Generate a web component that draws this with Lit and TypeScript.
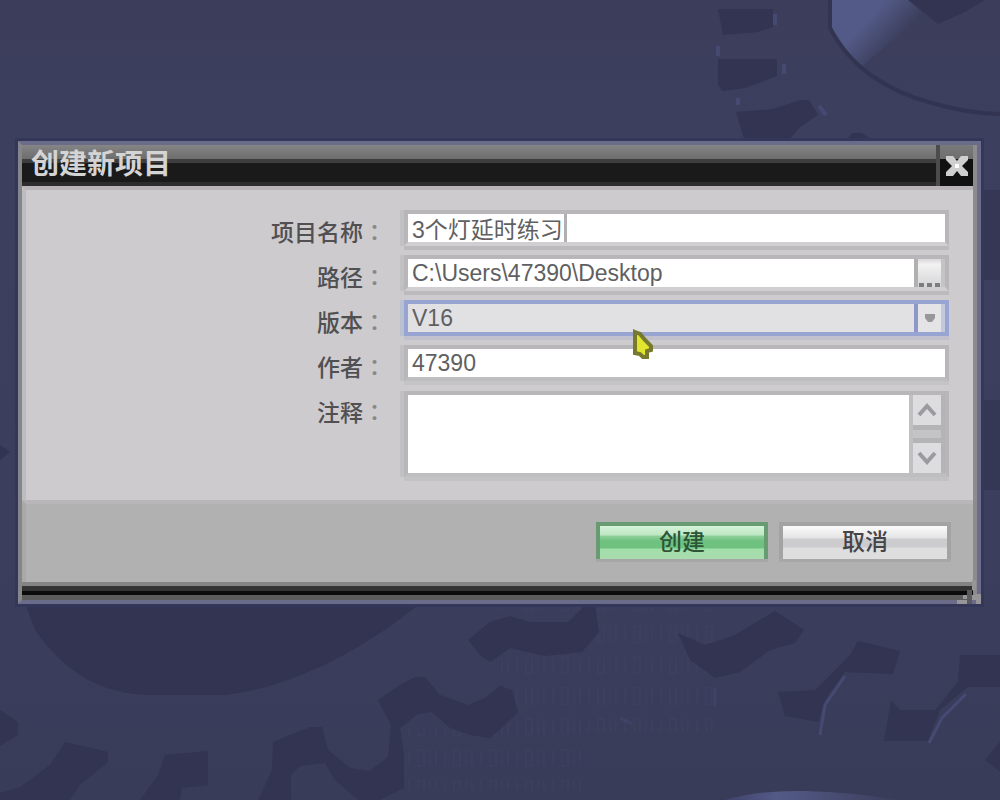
import { LitElement, html, css } from "lit";
import { customElement, state } from "lit/decorators.js";

@customElement("gear-backdrop")
class GearBackdrop extends LitElement {
  static styles = css`
    :host { display: block; overflow: hidden; }
    svg { display: block; width: 100%; height: 100%; }
  `;
  render() {
    return html`
      <svg viewBox="0 0 1000 800" preserveAspectRatio="xMidYMid slice" aria-hidden="true">
        <defs>
          <linearGradient id="base" x1="0" y1="0" x2="0" y2="1">
            <stop offset="0" stop-color="#3b3d5a" />
            <stop offset="0.15" stop-color="#3d3f5f" />
            <stop offset="0.7" stop-color="#3b3e5c" />
            <stop offset="1" stop-color="#393c59" />
          </linearGradient>
          <linearGradient id="shine" gradientUnits="userSpaceOnUse" x1="850" y1="10" x2="891" y2="48">
            <stop offset="0.35" stop-color="#535a87" />
            <stop offset="1" stop-color="#3b3e5b" />
          </linearGradient>
          <linearGradient id="glow" x1="0" y1="0" x2="1" y2="0">
            <stop offset="0" stop-color="#40436a" />
            <stop offset="0.3" stop-color="#535a87" />
            <stop offset="1" stop-color="#3b3d5b" />
          </linearGradient>
          <pattern id="bits" width="36" height="31" patternUnits="userSpaceOnUse">
            <path d="M4 6v16M13 6v16M22 6h6v16h-6zM34 6v16" fill="none" stroke="#3f4263" stroke-width="2" />
          </pattern>
        </defs>
        <rect width="1000" height="800" fill="url(#base)" />
        <rect x="500" y="608" width="216" height="124" fill="url(#bits)" opacity="0.4" />
        <rect x="406" y="728" width="180" height="62" fill="url(#bits)" opacity="0.4" />
        <g fill="#323451">
          <path d="M718 9H773V27L758 32 723 35Z" />
          <path d="M718 59H777V76L745 88 723 91 718 85Z" />
          <path d="M736 112L773 109 800 100H809L818 115 800 127 787 142H745Z" />
          <path d="M845 142L852 133H862L874 142Z" />
          <path d="M978 190H1000V280H978ZM978 400H1000V490H978Z" opacity="0.7" />
          <path d="M24 600L35 630C65 672 100 694 150 695H225C290 688 365 650 424 600Z" />
          <path d="M0 710L18 722V735L0 746Z" />
          <path d="M0 445L10 452 0 460Z" />
          <path d="M65 742L108 752V762L80 785 70 800H0V793L20 787 50 765Z" />
          <path d="M165 755L208 751V785L182 788 180 800H140L158 775Z" />
          <path d="M273 742L310 727H322L328 750 350 768 370 771 388 757 391 725 378 700 400 685 415 677H425L440 695 468 705 485 698 500 686 512 690 518 712 505 725 490 738 470 735 450 728 432 712 418 714 400 728 404 755V788L380 800H358L335 780 325 763 300 766 291 775V800H258L272 770Z" />
          <path d="M468 640L490 622 510 616 530 622H568L585 605H595L599 632 582 652 545 656 510 648 490 662 480 655Z" />
          <path d="M678 633L705 645 735 635 775 611 804 630 795 643 770 650 740 672 715 678 690 660Z" />
          <path d="M778 692L815 690 850 655 858 641 900 651 893 674 845 672 825 700 818 722 785 716Z" />
          <path d="M960 655H1000V687H968L940 710 928 741H884L891 700 900 710H935L958 682Z" />
          <path d="M1000 742L985 760 1000 772Z" />
        </g>
        <path d="M831 0V25Q840 52 862 66L925 14 912 0Z" fill="url(#shine)" />
        <path d="M908 0L938 24 965 12 985 0Z" fill="#323451" />
        <path d="M830 0V28Q846 58 872 76T932 103Q965 113 1000 114" fill="none" stroke="#323451" stroke-width="4" />
        <g fill="none" stroke="#464972" stroke-width="4">
          <path d="M775 14V25M784 64V74M718 46V56M738 98V105M819 106L826 115" />
          <path d="M820 735L825 705 845 676M929 743L942 718 966 694" stroke-width="3" />
          <path d="M620 718L632 724M715 688V706" stroke-width="3" opacity="0.5" />
        </g>
        <path d="M725 800Q760 790 805 791T900 800Z" fill="url(#glow)" />
      </svg>
    `;
  }
}

@customElement("app-root")
class AppRoot extends LitElement {
  @state() private projectName = "3个灯延时练习";

  static styles = css`
    :host {
      display: grid;
      grid-template: minmax(100vh, auto) / minmax(0, 1fr);
      font-family: "Liberation Sans", "Noto Sans CJK SC", sans-serif;
      font-size: 23px;
      color: #49494b;
      background: #3c3e5c;
    }
    * { box-sizing: border-box; }
    gear-backdrop, .stage { grid-area: 1 / 1; }
    gear-backdrop { height: 100%; min-height: 0; contain: size; }
    .stage {
      z-index: 1;
      display: grid;
      align-content: center;
      padding: 0 19px 55px 18px;
    }
    input, select, textarea, button {
      font: inherit;
      color: #5f5f62;
      margin: 0;
      border-radius: 0;
      outline: none;
      min-width: 0;
    }
    .dialog {
      position: relative;
      border: 4px solid #6a6c89;
      border-left-color: #85868c;
      box-shadow: 0 0 0 3px #34365a;
    }
    .frame { border-right: 4px solid #8c8b8e; }
    .titlebar {
      display: flex;
      height: 41px;
      background: linear-gradient(#858585 0, #6d6d6d 14px, #3e3e3e 14px, #3e3e3e 18px, #1a1a1a 18px, #1a1a1a 37px, #2c2c2c 37px);
    }
    h1 {
      flex: 1;
      margin: 0;
      padding-left: 9px;
      font-size: 28px;
      line-height: 39px;
      font-weight: 700;
      color: #d4d4d5;
    }
    .close {
      width: 37px;
      padding: 0;
      border: 0;
      border-left: 4px solid #4c4c4c;
      background: linear-gradient(#7a7a7a 0, #6d6d6d 14px, #111 14px);
      display: grid;
      place-items: center;
    }
    .body {
      background: #cdcbce;
      border-top: 4px solid #b7b3b6;
      border-left: 4px solid #bdbcbe;
      padding: 20px 24px 23px 0;
      display: grid;
      grid-template-columns: 360px minmax(0, 1fr);
      row-gap: 9px;
    }
    label {
      height: 36px;
      text-align: right;
      line-height: 42px;
      color: #505052;
      font-weight: 500;
    }
    .colon {
      font-family: "Noto Sans CJK TC", sans-serif;
      color: #88878a;
    }
    .field {
      position: relative;
      display: flex;
      height: 36px;
      margin-left: 18px;
      border: 4px solid #b8b6b8;
      border-bottom-color: #d0ced0;
      background: #fff;
      box-shadow: 0 4px #bcbabc, -4px 0 #c1c0c2;
    }
    .field input {
      flex: 1;
      border: 0;
      padding: 0 4px;
      background: none;
    }
    .caret {
      position: absolute;
      left: 156px;
      top: 0;
      width: 3px;
      height: 28px;
      background: #b0b0b2;
    }
    .browse {
      width: 31px;
      padding: 0;
      border: 0;
      border-left: 4px solid #b0b0b0;
      border-right: 4px solid #c4c4c6;
      background: linear-gradient(#d8d8da, #f2f2f3 20%, #d5d5d7);
      display: grid;
      place-items: end center;
    }
    .field.active {
      display: grid;
      grid-template-columns: minmax(0, 1fr) 31px;
      border-color: #98a4d2;
      background: #e1e1e4;
      box-shadow: 0 4px #c0c1cd, -4px 0 #b9c0cf;
    }
    select {
      grid-area: 1 / 1 / 2 / 3;
      appearance: none;
      border: 0;
      padding: 0 35px 0 4px;
      background: none;
    }
    .arrow {
      grid-area: 1 / 2;
      pointer-events: none;
      border-left: 4px solid #8c98c8;
      border-right: 4px solid #c3c8dc;
      background: #e4e3e6;
      display: grid;
      place-items: center;
    }
    .field.author {
      border-bottom-color: #bebdbf;
      box-shadow: 0 4px #c4c3c6, -4px 0 #c1c0c2;
    }
    .field.comment {
      height: 86px;
      margin-top: 1px;
      border-bottom-color: #bebdbf;
      box-shadow: 0 4px #c2c2c5, -4px 0 #c1c0c2;
    }
    textarea {
      flex: 1;
      resize: none;
      border: 0;
      padding: 0 4px;
      background: none;
      overflow: hidden;
    }
    .scroll {
      width: 36px;
      border-left: 4px solid #c0bfc2;
      border-right: 4px solid #b4b3b6;
      background: #b4b3b6;
      display: flex;
      flex-direction: column;
      justify-content: space-between;
    }
    .scroll button {
      height: 30px;
      padding: 0;
      border: 0;
      background: #dddcdf;
      display: grid;
      place-items: center;
    }
    .track { height: 8px; background: #c4c3c6; }
    .footer {
      display: flex;
      justify-content: flex-end;
      gap: 11px;
      padding: 18px 22px 23px;
      background: #b1b1b1;
      border-top: 4px solid #b8b6b8;
      border-left: 4px solid #a9a9a9;
    }
    .action {
      width: 172px;
      height: 37px;
      padding: 0 0 2px;
      font-weight: 500;
      line-height: 30px;
      color: #454547;
      border: 4px solid #a3a3a3;
      border-bottom: 0;
      background: linear-gradient(#fbfbfb 0, #e4e4e6 12px, #cccbce 13px, #cccbce 21px, #dededf 22px, #dededf);
      box-shadow: 0 3px #a7a7a7;
    }
    .action.primary {
      color: #2c5637;
      border-color: #689b71;
      background: linear-gradient(#d5f2d8 0, #bfe7c4 9px, #8fd09a 10px, #6fc180 15px, #6fc180 22px, #a2dfaa 23px, #a9dbae);
    }
    .base {
      height: 18px;
      background: linear-gradient(#848484 0, #848484 4px, #333 4px, #333 9px, #0b0b0b 9px, #0b0b0b 13px, #5c5c5c 13px);
    }
    .grip { position: absolute; right: -4px; bottom: -4px; }
    .pointer { position: absolute; left: 610px; top: 184px; pointer-events: none; }
  `;

  render() {
    return html`
      <gear-backdrop></gear-backdrop>
      <main class="stage">
        <form class="dialog" role="dialog" aria-labelledby="title" @submit=${(e: Event) => e.preventDefault()}>
          <div class="frame">
            <header class="titlebar">
              <h1 id="title">创建新项目</h1>
              <button class="close" type="button" aria-label="关闭">
                <svg width="24" height="24" viewBox="0 0 24 24">
                  <path d="M1 2H8L12 7 16 2H23V6L17 12 23 18V22H16L12 17 8 22H1V18L7 12 1 6Z" fill="#cfcfcf" />
                  <rect x="10" y="10" width="4" height="4" fill="#fff" />
                </svg>
              </button>
            </header>
            <div class="body">
              <label for="name">项目名称<span class="colon">：</span></label>
              <div class="field">
                <input id="name" type="text" .value=${this.projectName}
                  @input=${(e: Event) => (this.projectName = (e.target as HTMLInputElement).value)} />
                <span class="caret"></span>
              </div>
              <label for="path">路径<span class="colon">：</span></label>
              <div class="field">
                <input id="path" type="text" value="C:\\Users\\47390\\Desktop" />
                <button class="browse" type="button" aria-label="浏览">
                  <svg width="23" height="4" viewBox="0 0 23 4">
                    <path d="M1 2H6M9 2H14M17 2H22" stroke="#7d7d7f" stroke-width="4" />
                  </svg>
                </button>
              </div>
              <label for="version">版本<span class="colon">：</span></label>
              <div class="field active">
                <select id="version"><option selected>V16</option></select>
                <span class="arrow">
                  <svg width="12" height="10" viewBox="0 0 12 10"><path d="M1 1H11V5L8 9H4L1 5Z" fill="#98989c" /></svg>
                </span>
              </div>
              <label for="author">作者<span class="colon">：</span></label>
              <div class="field author"><input id="author" type="text" value="47390" /></div>
              <label for="comment">注释<span class="colon">：</span></label>
              <div class="field comment">
                <textarea id="comment"></textarea>
                <div class="scroll">
                  <button type="button" aria-label="向上">
                    <svg width="20" height="14" viewBox="0 0 20 14"><path d="M2 12L10 3 18 12" fill="none" stroke="#9b9a9e" stroke-width="4" /></svg>
                  </button>
                  <div class="track"></div>
                  <button type="button" aria-label="向下">
                    <svg width="20" height="14" viewBox="0 0 20 14"><path d="M2 2L10 11 18 2" fill="none" stroke="#9b9a9e" stroke-width="4" /></svg>
                  </button>
                </div>
              </div>
            </div>
            <footer class="footer">
              <button class="action primary" type="submit">创建</button>
              <button class="action" type="button">取消</button>
            </footer>
            <div class="base"></div>
          </div>
          <svg class="grip" width="24" height="24" viewBox="0 0 24 24" aria-hidden="true">
            <path d="M15 0H19V10H15ZM6 15H10V19H6ZM0 20H10V24H0ZM19 14H24V24H19V20H15V15H19Z" fill="#969698" />
            <path d="M10 10H15V15H10ZM10 19H15V24H10Z" fill="#5a5a5e" />
          </svg>
          <svg class="pointer" width="24" height="32" viewBox="0 0 24 32" aria-hidden="true">
            <path d="M3 3L8 5 13 11 19 17V21L15 22 15 28H11L8 25 3 24Z" fill="#e2e52e" stroke="#77792f" stroke-width="4" />
          </svg>
        </form>
      </main>
    `;
  }
}
